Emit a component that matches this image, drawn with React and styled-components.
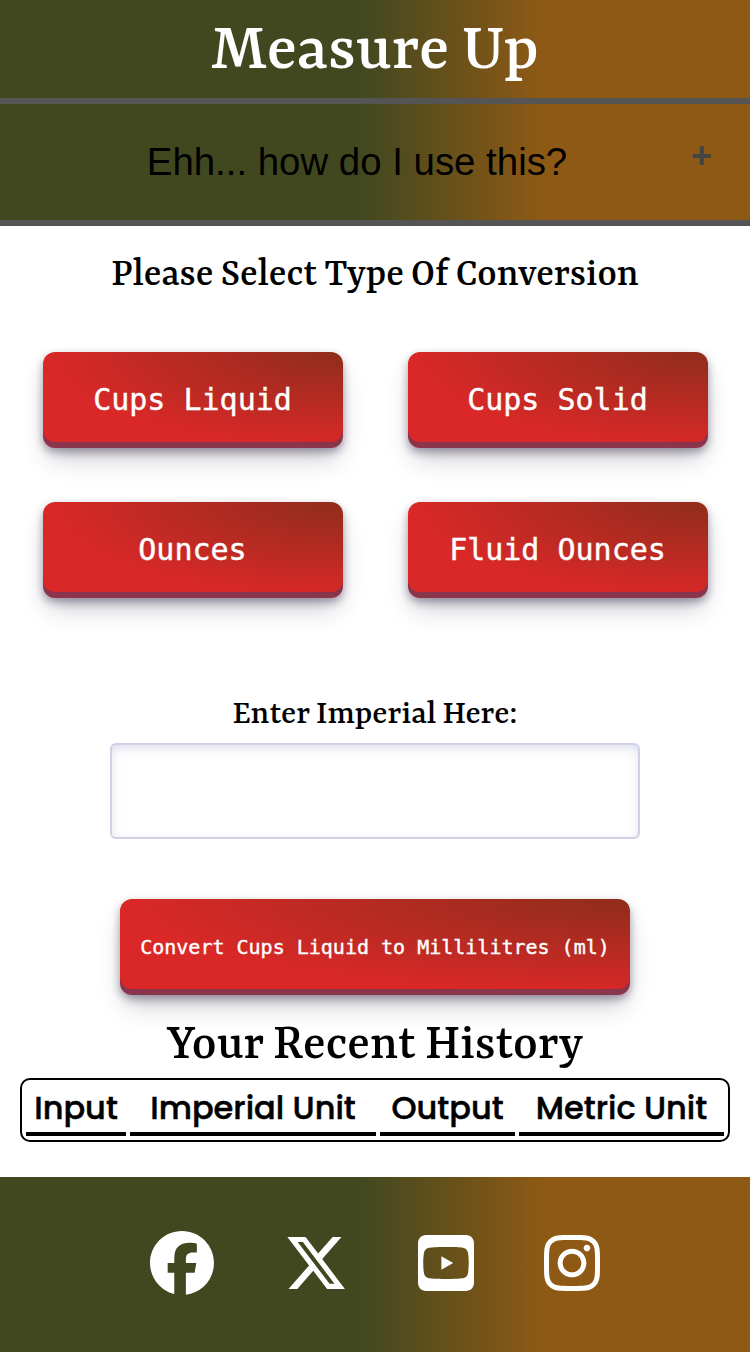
import React from "react";
import styled, { createGlobalStyle } from "styled-components";
import { FaFacebook, FaXTwitter, FaSquareYoutube, FaInstagram } from "react-icons/fa6";

const GlobalStyle = createGlobalStyle`
  *, *::before, *::after { box-sizing: border-box; }
  body { margin: 0; background: #fff; color: #000; }
  h1, h2, h3 { margin: 0; }
`;

const band = "linear-gradient(90deg, #414820 0%, #414820 48%, #8d5915 72%, #8d5915 100%)";

const Page = styled.div`
  width: 750px;
  min-height: 1352px;
  display: flex;
  flex-direction: column;
  background: #fff;
`;

const Header = styled.header`
  height: 104px;
  background: ${band};
  background-clip: padding-box;
  border-bottom: 6px solid #555;
  text-align: center;
`;

const Heading = styled.h2`
  padding-top: ${(p) => p.$drop}px;
  font-family: Rasa, "DejaVu Serif Condensed", "DejaVu Serif", serif;
  font-weight: 500;
  white-space: nowrap;
  word-spacing: -0.03em;
  text-align: center;
  color: ${(p) => p.$color || "#000"};
  font-size: ${(p) => p.$size}px;
  line-height: ${(p) => p.$line}px;
`;

const Help = styled.button`
  height: 122px;
  display: flex;
  align-items: center;
  padding: 0 38px 0 40px;
  border: 0;
  border-bottom: 6px solid #555;
  background: ${band};
  color: #000;
  font: 400 38.4px/44px "Liberation Sans", Arial, sans-serif;
`;

const HelpText = styled.span`
  flex: 1;
  text-align: center;
`;

const Plus = styled.span`
  width: 38px;
  padding-bottom: 12px;
  text-align: right;
  font-size: 36px;
  font-weight: 700;
  color: #444;
`;

const Main = styled.main`
  display: flex;
  flex-direction: column;
  align-items: center;
  padding-top: 24px;
  height: 951px;
`;

const Choices = styled.div`
  display: grid;
  grid-template-columns: 300px 300px;
  column-gap: 65px;
  row-gap: 54px;
  margin-top: 54px;
`;

const Button = styled.button`
  width: ${(p) => p.$width || 300}px;
  height: 96px;
  padding: 0 0 ${(p) => (p.$size ? 0 : 2)}px;
  border: 0;
  border-radius: 12px;
  color: #fff;
  background: radial-gradient(100% 100% at 100% 0, #8f2d1b 0, #da2828 100%);
  box-shadow: rgba(45, 35, 66, 0.4) 0 4px 8px, rgba(45, 35, 66, 0.3) 0 14px 26px -6px,
    rgba(58, 65, 111, 0.5) 0 -6px 0 inset;
  font-family: "DejaVu Sans Mono", monospace;
  font-size: ${(p) => p.$size || 30}px;
  -webkit-text-stroke: 0.4px currentColor;
  white-space: nowrap;
`;

const Field = styled.label`
  display: flex;
  flex-direction: column;
  align-items: center;
  margin: 94px 0 60px;
`;

const Input = styled.input`
  width: 530px;
  height: 96px;
  margin-top: 11px;
  border: 2px solid #d0d0e6;
  border-radius: 6px;
  outline: 0;
  background: #fff;
  box-shadow: rgba(100, 100, 170, 0.25) 0 4px 12px -2px inset;
`;

const Table = styled.div`
  width: 710px;
  height: 64px;
  display: grid;
  grid-template-columns: 100px 246px 135px 205px;
  gap: 4px;
  padding: 4px;
  border: 2px solid #000;
  border-radius: 10px;
`;

const Cell = styled.div`
  height: 52px;
  border-bottom: 4px solid #000;
  text-align: center;
  white-space: nowrap;
  font-family: Poppins, Inter, sans-serif;
  font-size: 32px;
  font-weight: 500;
  line-height: 48px;
  -webkit-text-stroke: 0.5px currentColor;
`;

const Footer = styled.footer`
  height: 175px;
  display: flex;
  justify-content: center;
  align-items: center;
  gap: 70px;
  padding-bottom: 3px;
  background: ${band};
  color: #fff;
  svg { height: 64px; width: 64px; display: block; }
  svg:nth-child(n + 3) { width: 56px; }
`;

const units = ["Cups Liquid", "Cups Solid", "Ounces", "Fluid Ounces"];
const columns = ["Input", "Imperial Unit", "Output", "Metric Unit"];

export default function App() {
  return (
    <Page>
      <GlobalStyle />
      <Header>
        <Heading as="h1" $color="#fff" $size={70.2} $line={92} $drop={6}>Measure Up</Heading>
      </Header>
      <Help>
        <HelpText>Ehh... how do I use this?</HelpText>
        <Plus>+</Plus>
      </Help>
      <Main>
        <Heading $size={41.05} $line={44} $drop={4}>Please Select Type Of Conversion</Heading>
        <Choices>
          {units.map((unit) => (
            <Button key={unit}>{unit}</Button>
          ))}
        </Choices>
        <Field>
          <Heading as="span" $size={35.2} $line={34} $drop={6}>Enter Imperial Here:</Heading>
          <Input />
        </Field>
        <Button $width={510} $size={20}>Convert Cups Liquid to Millilitres (ml)</Button>
        <Heading $size={52.6} $line={63} $drop={20}>Your Recent History</Heading>
        <Table>
          {columns.map((label) => (
            <Cell key={label}>{label}</Cell>
          ))}
        </Table>
      </Main>
      <Footer>
        <FaFacebook />
        <FaXTwitter />
        <FaSquareYoutube />
        <FaInstagram />
      </Footer>
    </Page>
  );
}
